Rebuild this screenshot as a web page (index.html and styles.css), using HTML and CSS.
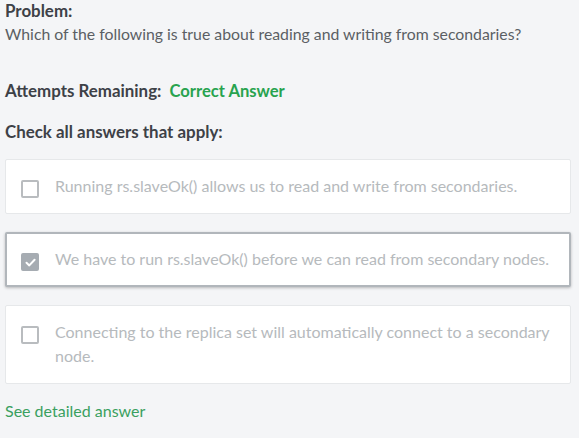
FILE: index.html
```html
<!DOCTYPE html>
<html>
<head>
<meta charset="utf-8">
<link rel="stylesheet" href="styles.css">
</head>
<body>
<div class="page">
  <div class="label">Problem:</div>
  <div class="question">Which of the following is true about reading and writing from secondaries?</div>
  <div class="attempts"><span class="label">Attempts Remaining:</span><span class="correct">Correct Answer</span></div>
  <div class="label check-all">Check all answers that apply:</div>
  <div class="options">
    <div class="option">
      <span class="box"></span>
      <span class="text">Running rs.slaveOk() allows us to read and write from secondaries.</span>
    </div>
    <div class="option selected">
      <span class="box checked"><svg width="13" height="13" viewBox="0 0 13 13"><path d="M2.5 6.8 L5.3 9.4 L10.6 3.8" fill="none" stroke="#fff" stroke-width="2" stroke-linecap="round" stroke-linejoin="round"/></svg></span>
      <span class="text">We have to run rs.slaveOk() before we can read from secondary nodes.</span>
    </div>
    <div class="option">
      <span class="box"></span>
      <span class="text">Connecting to the replica set will automatically connect to a secondary node.</span>
    </div>
  </div>
  <a class="detail">See detailed answer</a>
</div>
</body>
</html>
```

FILE: styles.css
```css
html, body {
  margin: 0;
  padding: 0;
  background: #f4f5f7;
}
body {
  font-family: Lato, "Liberation Sans", sans-serif;
}
.page {
  padding: 1px 8px 0 5px;
  width: 566px;
}
.label {
  font-weight: bold;
  font-size: 16.9px;
  color: #3d4147;
  line-height: 20px;
}
.question {
  font-size: 15.8px;
  color: #5b5f64;
  line-height: 24px;
  margin-top: 1px;
}
.attempts {
  margin-top: 35px;
  display: flex;
  gap: 8px;
}
.correct {
  font-weight: bold;
  font-size: 16.6px;
  color: #28a34f;
  line-height: 20px;
}
.check-all {
  margin-top: 21px;
}
.options {
  margin-top: 17px;
  display: flex;
  flex-direction: column;
  gap: 18px;
}
.option {
  background: #fff;
  border: 1px solid #e6e8ea;
  border-radius: 2px;
  display: flex;
  align-items: flex-start;
  padding: 14px 14px 15px 15px;
  gap: 16px;
}
.option.selected {
  border: 2px solid #b1b6bb;
  box-shadow: 0 1px 3px rgba(0,0,0,0.25);
  padding: 13px 13px 14px 14px;
}
.box {
  flex: none;
  width: 14px;
  height: 14px;
  border: 2px solid #b9bcbf;
  border-radius: 2px;
  margin-top: 6px;
  display: flex;
  align-items: center;
  justify-content: center;
}
.box.checked {
  background: #a6acb2;
  border-color: #a6acb2;
}
.text {
  font-size: 16px;
  color: #b6babd;
  line-height: 24px;
}
.detail {
  display: block;
  margin-top: 15px;
  font-size: 16px;
  color: #3aa060;
  line-height: 24px;
}
```
